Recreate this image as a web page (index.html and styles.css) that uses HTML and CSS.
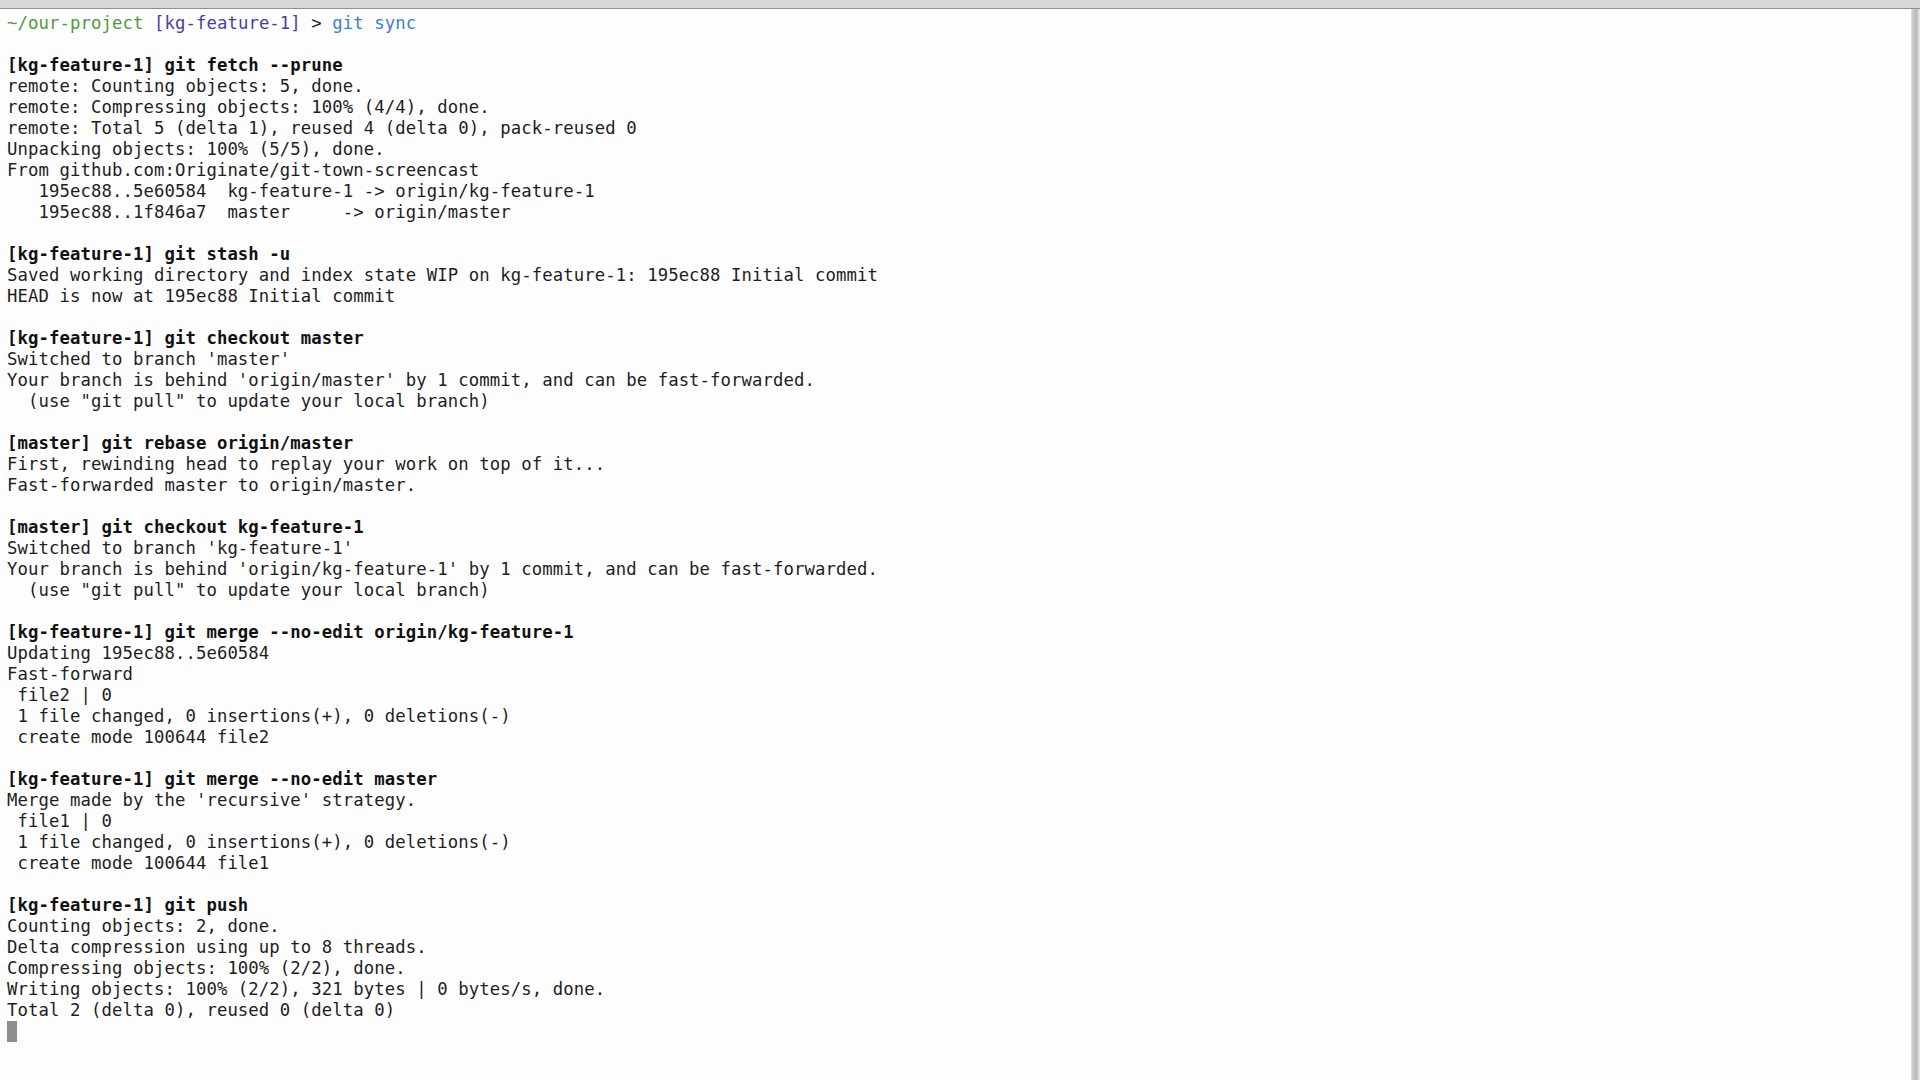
FILE: index.html
```html
<!DOCTYPE html>
<html lang="en">
  <head>
    <meta charset="UTF-8" />
    <meta name="viewport" content="width=device-width, initial-scale=1.0" />
    <title>git sync</title>

    <link rel="stylesheet" href="styles.css">
  </head>

  <body>
    <div class="titlebar"></div>
    <div class="window">
      <div class="term">
<pre class="out"><span class="path">~/our-project</span> <span class="branch">[kg-feature-1]</span> &gt; <span class="cmd">git sync</span>

<b>[kg-feature-1] git fetch --prune</b>
remote: Counting objects: 5, done.
remote: Compressing objects: 100% (4/4), done.
remote: Total 5 (delta 1), reused 4 (delta 0), pack-reused 0
Unpacking objects: 100% (5/5), done.
From github.com:Originate/git-town-screencast
   195ec88..5e60584  kg-feature-1 -&gt; origin/kg-feature-1
   195ec88..1f846a7  master     -&gt; origin/master

<b>[kg-feature-1] git stash -u</b>
Saved working directory and index state WIP on kg-feature-1: 195ec88 Initial commit
HEAD is now at 195ec88 Initial commit

<b>[kg-feature-1] git checkout master</b>
Switched to branch 'master'
Your branch is behind 'origin/master' by 1 commit, and can be fast-forwarded.
  (use "git pull" to update your local branch)

<b>[master] git rebase origin/master</b>
First, rewinding head to replay your work on top of it...
Fast-forwarded master to origin/master.

<b>[master] git checkout kg-feature-1</b>
Switched to branch 'kg-feature-1'
Your branch is behind 'origin/kg-feature-1' by 1 commit, and can be fast-forwarded.
  (use "git pull" to update your local branch)

<b>[kg-feature-1] git merge --no-edit origin/kg-feature-1</b>
Updating 195ec88..5e60584
Fast-forward
 file2 | 0
 1 file changed, 0 insertions(+), 0 deletions(-)
 create mode 100644 file2

<b>[kg-feature-1] git merge --no-edit master</b>
Merge made by the 'recursive' strategy.
 file1 | 0
 1 file changed, 0 insertions(+), 0 deletions(-)
 create mode 100644 file1

<b>[kg-feature-1] git push</b>
Counting objects: 2, done.
Delta compression using up to 8 threads.
Compressing objects: 100% (2/2), done.
Writing objects: 100% (2/2), 321 bytes | 0 bytes/s, done.
Total 2 (delta 0), reused 0 (delta 0)
<span class="cursor"> </span></pre>
      </div>
      <div class="edge"></div>
    </div>
  </body>
</html>
```

FILE: styles.css
```css
html,
body {
  margin: 0;
  padding: 0;
  height: 100%;
  background-color: #fdfdfd;
  overflow: hidden;
}
.titlebar {
  height: 8px;
  background-color: #d8d8d8;
  border-bottom: 1px solid #8f8f8f;
}
.window {
  display: flex;
  height: calc(100% - 9px);
}
.term {
  flex: 1;
  padding: 4px 0 0 7px;
}
.out {
  margin: 0;
  font-family: "DejaVu Sans Mono", "Liberation Mono", monospace;
  font-size: 17.3px;
  letter-spacing: 0.09px;
  line-height: 21px;
  color: #1e1e1e;
}
.out b {
  font-weight: bold;
  color: #111;
}
.path {
  color: #4f9a3f;
}
.branch {
  color: #4a3f9f;
}
.cmd {
  color: #3b80d0;
}
.cursor {
  display: inline-block;
  width: 10px;
  height: 21px;
  vertical-align: top;
  background-color: #8e8e8e;
}
.edge {
  width: 8px;
  border-left: 1px solid #dcdcdc;
  background: linear-gradient(to right, #cfcfcf, #b9b9b9 55%, #ececec);
}
```
